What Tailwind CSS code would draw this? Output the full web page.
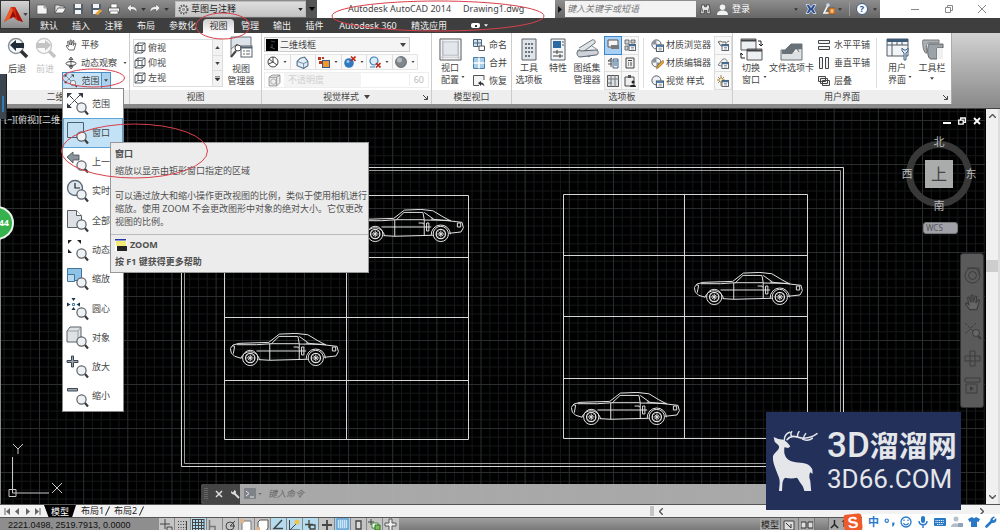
<!DOCTYPE html>
<html lang="zh-CN">
<head>
  <meta charset="UTF-8" />
  <meta name="viewport" content="width=device-width, initial-scale=1" />
  <title>Autodesk AutoCAD 2014 - Drawing1.dwg</title>
  <script src="https://cdn.jsdelivr.net/npm/@tailwindcss/browser@4"></script>
  <style>
    body, button, select, input {
      font-family: 'Noto Sans', 'Noto Sans CJK SC', sans-serif;
    }
  </style>
</head>
<body class="relative flex h-screen flex-col overflow-hidden bg-[#f0f0f0] text-[9px] leading-[12px] text-[#444]">

  <!-- Shared symbols -->
  <svg class="hidden" aria-hidden="true">
    <symbol id="lens" viewBox="0 0 24 24">
      <circle cx="15.500" cy="15.500" r="4.600" fill="#eef2f4" stroke="#5a6067" stroke-width="1.200" />
      <path d="M19 19l3 3.500" stroke="#3a3a3a" stroke-width="2.200" />
    </symbol>
    <symbol id="arrows" viewBox="0 0 24 24">
      <path d="M4 4l12 12M14 3L3 14" stroke="#333b44" stroke-width="1" stroke-dasharray="5 1" />
      <path d="M1 1h5L1 6zM17 1h-5l5 5zM1 16v-5l5 5z" fill="#333b44" />
    </symbol>
    <symbol id="tri" viewBox="0 0 6 4"><path d="M0 0h6L3 4z" fill="currentColor" /></symbol>
    <symbol id="cube" viewBox="0 0 12 12">
      <path d="M1 3.500l3-2.500h7v7.500L8 11H1zM1 3.500h7V11M8 3.500L11 1M4 1v7.500h7M4 8.500L1 11" fill="none" stroke="#4a5058" stroke-width=".9" />
    </symbol>
    <symbol id="hand" viewBox="0 0 12 12">
      <path d="M4 11L1 7l1-.8 1.500 1.300L2.500 2.500l1-.3L5 6V1h1.200l.3 5L8 1.500l1 .3L8.300 6.500 10 4l1 .5L9 11z" fill="inherit" stroke="currentColor" stroke-width=".8" />
    </symbol>
    <symbol id="orbit" viewBox="0 0 12 12">
      <path d="M6 1v10M6 0L4 2.500h4zM6 12L4 9.500h4z" stroke="currentColor" stroke-width=".8" fill="#eee" />
      <ellipse cx="6" cy="6.500" rx="5" ry="2" fill="none" stroke="currentColor" />
    </symbol>
    <symbol id="ball" viewBox="0 0 12 12">
      <circle cx="5" cy="5" r="4.200" fill="#f3f5f7" stroke="#555e68" stroke-width=".9" />
      <path d="M5 1v4H1a4 4 0 0 1 4-4M5 5h4a4 4 0 0 1-4 4z" fill="#8a949e" />
    </symbol>
    <symbol id="sheet" viewBox="0 0 12 12">
      <rect x="5" y="5.500" width="6.500" height="6" fill="#fff" stroke="#4a5560" stroke-width=".9" />
      <path d="M5 6.500h6.500" stroke="#3a6da0" stroke-width="1.500" />
      <path d="M7 8.500h3M7 10h3" stroke="#777" stroke-width=".7" />
    </symbol>
    <symbol id="car" viewBox="0 0 332 102">
      <g fill="none" stroke="#e4e4e4" stroke-width="3" stroke-linejoin="round">
        <path d="M34 76L14 70 4 60 1 46l8-10 18-5 90-3 32-25 50-2 36 4 30 18 24 13 34 4 4 16-7 13-36 4M86 80l34 2 115-3" />
        <path d="M20 35l60 0 45-3 23-22h57l4 22h-85M209 10l28 20M120 32v50M209 32v48M80 54h150M209 33l80 1M6 38l8 2-4 22M309 42h10v12h-10zM229 30l60 6" />
        <path d="M216 42h7v24h-7zM192 42h14v4M33 76a29 29 0 0 1 56 4M230 78a29 29 0 0 1 58-2" />
        <circle cx="61" cy="75" r="23" /><circle cx="61" cy="75" r="14" stroke-width="4" />
        <circle cx="259" cy="75" r="23" /><circle cx="259" cy="75" r="14" stroke-width="4" />
        <path d="M51 75h20M61 65v20M54 68l14 14M68 68L54 82M249 75h20M259 65v20M252 68l14 14M266 68l-14 14" />
      </g>
    </symbol>
  </svg>

  <!-- Title bar and ribbon tabs -->
  <header class="flex h-[33px] shrink-0 bg-[#3e3e3e]">
    <button aria-label="应用程序菜单" class="flex h-[29px] w-[30px] shrink-0 items-center border border-[#333] bg-linear-to-b from-[#d4d4d4] to-[#8c8c8c] pl-[2px]">
      <svg class="size-[20px]" viewBox="0 0 20 20"><path d="M1 17L8 2h4l8 15-6-2-4-3-4 2z" fill="#d22c12" /><path d="M8 2L1 17l5-3 4-9z" fill="#f05a28" /><path d="M10 6l3 6-3 0-3 2z" fill="#8f1006" /><path d="M12 2l8 15-6-2z" fill="#a81208" /></svg>
      <svg class="h-[3px] w-[5px] text-[#444]"><use href="#tri" /></svg>
    </button>
    <div class="flex min-w-0 flex-1 flex-col">
      <div class="flex h-[18px] shrink-0 items-stretch bg-linear-to-b from-[#8e8e8e] to-[#666]">
        <div class="flex w-[145px] shrink-0 items-center pl-[3px]">
          <button aria-label="新建" class="flex w-[18px] justify-center"><svg class="size-[12px]" viewBox="0 0 12 12"><path d="M1 2h7l3 3v6H1z" fill="#f4f4f4" stroke="#555" stroke-width=".7" /><path d="M8 2v3h3" fill="#ccc" stroke="#777" stroke-width=".6" /></svg></button>
          <button aria-label="打开" class="flex w-[18px] justify-center"><svg class="size-[12px]" viewBox="0 0 12 12"><path d="M1 10V2h4l1 1h4v2" fill="#ddd" stroke="#444" stroke-width=".7" /><path d="M1 10l3-5h8l-3 5z" fill="#f5f5f5" stroke="#444" stroke-width=".7" /></svg></button>
          <button aria-label="保存" class="flex w-[18px] justify-center"><svg class="size-[12px]" viewBox="0 0 12 12"><path d="M1 1h10v10H1z" fill="#52606e" /><path d="M3 1h6v4H3zM3 7h6v4H3z" fill="#f4f4f4" /></svg></button>
          <button aria-label="另存为" class="flex w-[18px] justify-center"><svg class="size-[12px]" viewBox="0 0 12 12"><path d="M1 1h10v10H1z" fill="#52606e" /><path d="M3 1h6v4H3zM3 7h6v4H3z" fill="#f4f4f4" /><path d="M5 11l5-5 2 2-4 4z" fill="#e9a13a" /></svg></button>
          <button aria-label="打印" class="flex w-[18px] justify-center"><svg class="size-[12px]" viewBox="0 0 12 12"><path d="M3 1h6v4H3z" fill="#fff" stroke="#555" stroke-width=".6" /><path d="M.5 5h11v4H.5z" fill="#eee" stroke="#444" stroke-width=".7" /><path d="M2 8h8v3H2z" fill="#fff" stroke="#555" stroke-width=".6" /></svg></button>
          <button aria-label="放弃" class="flex w-[18px] justify-center"><svg class="size-[12px]" viewBox="0 0 12 12"><path d="M1 5l4-4v2.500c4 0 6 1.500 6 6C9.500 7 8 6.500 5 6.500V9z" fill="#eee" stroke="#555" stroke-width=".5" /></svg></button>
          <svg class="h-[3px] w-[5px] text-[#333]"><use href="#tri" /></svg>
          <button aria-label="重做" class="flex w-[18px] justify-center"><svg class="size-[12px] -scale-x-100" viewBox="0 0 12 12"><path d="M1 5l4-4v2.500c4 0 6 1.500 6 6C9.500 7 8 6.500 5 6.500V9z" fill="#eee" stroke="#555" stroke-width=".5" /></svg></button>
          <svg class="h-[3px] w-[5px] text-[#333]"><use href="#tri" /></svg>
        </div>
        <label class="my-[1px] flex w-[131px] shrink-0 items-center gap-[2px] border border-[#bbb] bg-linear-to-b from-[#dedede] to-[#c4c4c4] px-[2px]">
          <svg class="size-[11px] shrink-0" viewBox="0 0 12 12"><circle cx="6" cy="6" r="4.500" fill="#eee" stroke="#555" stroke-width="1.800" stroke-dasharray="1.700 1.200" /><circle cx="6" cy="6" r="3.500" fill="#eee" stroke="#555" stroke-width=".7" /><circle cx="6" cy="6" r="1.400" fill="#aaa" stroke="#555" stroke-width=".6" /></svg>
          <select aria-label="工作空间" class="min-w-0 flex-1 appearance-none text-[#222]"><option>草图与注释</option></select>
          <svg class="h-[3px] w-[5px] shrink-0 text-[#222]"><use href="#tri" /></svg>
        </label>
        <button aria-label="自定义快速访问" class="flex w-[11px] shrink-0 items-center justify-center bg-[#555] text-black"><svg class="h-[4px] w-[6px]"><use href="#tri" /></svg></button>
        <h1 class="flex flex-1 items-center gap-[12px] bg-white pl-[31px] whitespace-nowrap"><span>Autodesk AutoCAD 2014</span><span>Drawing1.dwg</span></h1>
        <button aria-label="展开搜索" class="flex w-[10px] shrink-0 items-center justify-center"><svg class="h-[7px] w-[4px]" viewBox="0 0 4 7"><path d="M0 0l4 3.500L0 7z" fill="#111" /></svg></button>
        <input aria-label="搜索" placeholder="键入关键字或短语" class="my-[1px] w-[131px] shrink-0 bg-[#f2f2f2] px-[2px] italic placeholder:text-[#777]" />
        <div class="flex w-[184px] shrink-0 items-center pl-[4px] text-white">
          <button aria-label="搜索按钮" class="w-[12px]"><svg class="size-[11px]" viewBox="0 0 12 12"><path d="M2 1h3v2h2V1h3l1.500 9.500h-4V7h-3v3.500h-4z" fill="#e8e8e8" stroke="#333" stroke-width=".8" /><path d="M2.500 5v4M9.500 5v4" stroke="#555" /></svg></button>
          <button class="ml-[5px] flex items-center gap-[4px]"><svg class="size-[11px]" viewBox="0 0 12 12"><circle cx="6" cy="3.500" r="3" fill="#f2f2f2" /><path d="M0 12c0-4 3-5 6-5s6 1 6 5z" fill="#f2f2f2" /></svg>登录</button>
          <svg class="ml-[44px] h-[3px] w-[4px] text-[#333]"><use href="#tri" /></svg>
          <button aria-label="Exchange" class="ml-[7px]"><svg class="size-[12px]" viewBox="0 0 12 12"><path d="M1 1.500h3l2 3 2-3h3L8.500 6l2.500 4.500H8L6 7.500l-2 3H1L3.500 6z" fill="#2c4f92" stroke="#dde6f4" stroke-width=".8" /></svg></button>
          <button aria-label="连接" class="ml-[6px]"><svg class="size-[12px]" viewBox="0 0 12 12"><path d="M5 2l-4 8h6" fill="none" stroke="#fff" stroke-width="1.500" /><circle cx="5" cy="2" r="1.800" fill="#c9d8ee" /><rect x="6" y="5" width="6" height="6" fill="#e88b2d" stroke="#7a4310" stroke-width=".6" /><path d="M9 6.500v3" stroke="#fff" /></svg></button>
          <svg class="ml-[3px] h-[3px] w-[4px] text-[#333]"><use href="#tri" /></svg>
          <span class="ml-[7px] h-[14px] w-px bg-[#999]"></span>
          <button aria-label="帮助" class="ml-[6px] flex size-[12px] items-center justify-center rounded-full border border-[#3a5a8c] bg-white font-bold leading-[10px] text-[#24508f]">?</button>
          <svg class="ml-[5px] h-[3px] w-[4px] text-[#333]"><use href="#tri" /></svg>
        </div>
        <div class="flex w-[120px] shrink-0 items-center justify-between bg-white pr-[14px] pl-[31px] text-[#888]">
          <button aria-label="最小化"><svg class="size-[8px]" viewBox="0 0 8 8"><path d="M0 4.500h8" stroke="currentColor" /></svg></button>
          <button aria-label="还原"><svg class="size-[8px]" viewBox="0 0 8 8"><path d="M.5 2.500h5v5h-5zM2.500 2.500v-2h5v5h-2" fill="none" stroke="currentColor" /></svg></button>
          <button aria-label="关闭"><svg class="size-[8px]" viewBox="0 0 8 8"><path d="M0 0l8 8M8 0L0 8" stroke="currentColor" /></svg></button>
        </div>
      </div>
      <nav class="flex h-[15px] items-end pl-[3px] leading-[14px] text-[#f0f0f0]">
        <a href="#" class="w-[32px] text-center">默认</a>
        <a href="#" class="w-[32px] text-center">插入</a>
        <a href="#" class="w-[33px] text-center">注释</a>
        <a href="#" class="w-[32px] text-center">布局</a>
        <a href="#" class="w-[41px] text-center">参数化</a>
        <a href="#" class="w-[31px] rounded-t-sm bg-linear-to-b from-[#cfcfcf] to-white text-center text-[#333]">视图</a>
        <a href="#" class="w-[32px] text-center">管理</a>
        <a href="#" class="w-[32px] text-center">输出</a>
        <a href="#" class="w-[33px] text-center">插件</a>
        <a href="#" class="w-[74px] text-center">Autodesk 360</a>
        <a href="#" class="w-[48px] text-center">精选应用</a>
        <button aria-label="功能区显示" class="ml-[18px] flex h-[15px] items-center gap-[4px]"><span class="flex h-[5px] w-[9px] items-center justify-center rounded-xs bg-white"><span class="size-[2px] bg-[#333]"></span></span><svg class="h-[3px] w-[4px]"><use href="#tri" /></svg></button>
      </nav>
    </div>
  </header>

  <!-- Ribbon -->
  <section class="flex h-[71px] shrink-0 bg-linear-to-b from-[#d2d2d2] to-[#8d8d8d]">
    <!-- 二维导航 -->
    <div class="flex w-[130px] shrink-0 flex-col border-r border-[#ccc] bg-white">
      <div class="flex flex-1 pt-[3px]">
        <button class="flex w-[34px] flex-col items-center"><svg class="size-[23px]" viewBox="0 0 23 23"><circle cx="10" cy="10" r="7.500" fill="#f4f8fa" stroke="#8c959c" stroke-width="1.500" /><path d="M15 15l6 6" stroke="#333" stroke-width="3.500" /><path d="M4 9l6-5v3h8v5h-8v3z" fill="#1f2d3a" /></svg><span class="mt-[4px]">后退</span></button>
        <button class="flex w-[22px] flex-col items-center text-[#c4c4c4]"><svg class="size-[23px]" viewBox="0 0 23 23"><circle cx="10" cy="10" r="7.500" fill="#fafafa" stroke="#ccc" stroke-width="1.500" /><path d="M15 15l6 6" stroke="#c4c4c4" stroke-width="3.500" /><path d="M17 9l-6-5v3H2v5h9v3z" fill="#c4c4c4" /></svg><span class="mt-[4px]">前进</span></button>
        <div class="ml-[6px] flex flex-col">
          <button class="flex h-[18px] items-center gap-[4px] pl-[3px]"><svg class="size-[12px] fill-white"><use href="#hand" /></svg>平移</button>
          <button class="flex h-[18px] items-center gap-[4px] pl-[3px]"><svg class="size-[12px]"><use href="#orbit" /></svg>动态观察<svg class="ml-[2px] h-[2px] w-[4px]"><use href="#tri" /></svg></button>
          <button class="flex h-[17px] w-[49px] items-center border border-[#4a90c8] bg-[#c8e3f5]"><svg class="ml-[1px] size-[14px]"><use href="#arrows" /><use href="#lens" /></svg><span class="ml-[2px] flex-1">范围</span><span class="flex h-full w-[9px] items-center justify-center border-l border-[#4a90c8] bg-[#a9d2ee]"><svg class="h-[3px] w-[4px]"><use href="#tri" /></svg></span></button>
        </div>
      </div>
      <h2 class="h-[14px] bg-[#eee] pt-px text-center">二维导航</h2>
    </div>
    <!-- 视图 -->
    <div class="flex w-[132px] shrink-0 flex-col border-r border-[#ccc] bg-white">
      <div class="flex flex-1 pt-[6px] pl-[3px]">
        <div class="flex h-[48px] w-[90px] border border-[#ddd]">
          <div class="flex flex-1 flex-col">
            <button class="flex flex-1 items-center gap-[2px]"><svg class="size-[12px]"><use href="#cube" /></svg>俯视</button>
            <button class="flex flex-1 items-center gap-[2px]"><svg class="size-[12px]"><use href="#cube" /></svg>仰视</button>
            <button class="flex flex-1 items-center gap-[2px]"><svg class="size-[12px]"><use href="#cube" /></svg>左视</button>
          </div>
          <div class="flex w-[10px] flex-col border-l border-[#ddd] bg-[#f2f2f2]">
            <button aria-label="上一行" class="flex flex-1 items-center justify-center"><svg class="h-[3px] w-[5px] rotate-180"><use href="#tri" /></svg></button>
            <button aria-label="下一行" class="flex flex-1 items-center justify-center border-y border-[#ddd]"><svg class="h-[3px] w-[5px]"><use href="#tri" /></svg></button>
            <button aria-label="展开" class="flex flex-1 items-center justify-center"><svg class="h-[5px] w-[5px]" viewBox="0 0 5 5"><path d="M0 .5h5M0 2h5L2.500 5z" fill="#333" stroke="#333" stroke-width=".5" /></svg></button>
          </div>
        </div>
        <button class="-mt-[3px] flex w-[36px] flex-col items-center"><svg class="h-[23px] w-[23px]" viewBox="0 0 23 23"><path d="M1 1h20v12H1z" fill="#dde3e8" stroke="#6c757d" /><path d="M1 21V13l6-5 4 4" fill="#f4f4f4" stroke="#777" /><circle cx="8" cy="12" r="3" fill="#fff" stroke="#444" /><path d="M6 15l-5 6" stroke="#444" stroke-width="2" /><rect x="11" y="10" width="11" height="11" fill="#fff" stroke="#52606e" /><path d="M11 11.500h11" stroke="#52606e" stroke-width="2" /><path d="M13 15h2m1 0h4M13 18h2m1 0h4" stroke="#666" /></svg><span class="mt-[4px]">视图<br />管理器</span></button>
      </div>
      <h2 class="h-[14px] bg-[#eee] pt-px text-center">视图</h2>
    </div>
    <!-- 视觉样式 -->
    <div class="flex w-[170px] shrink-0 flex-col border-r border-[#ccc] bg-white">
      <div class="flex flex-1 flex-col gap-[2px] px-[2px] pt-[4px]">
        <label class="flex h-[15px] w-[146px] items-center gap-[2px] border border-[#ccc] bg-[#f4f4f4] px-[1px]">
          <svg class="size-[12px] shrink-0" viewBox="0 0 12 12"><path d="M0 0h12v12H0z" fill="#000" /><path d="M5 2l4 1M4 8l5 2M6 5v4" stroke="#666" stroke-width=".7" /></svg>
          <select aria-label="视觉样式" class="min-w-0 flex-1 appearance-none"><option>二维线框</option></select>
          <svg class="mr-[2px] h-[4px] w-[6px] shrink-0"><use href="#tri" /></svg>
        </label>
        <div class="flex h-[16px] w-[154px] divide-x divide-[#ddd] border border-[#e4e4e4] bg-[#fafafa]">
          <button aria-label="面样式" class="flex flex-1 items-center justify-around"><svg class="size-[12px]" viewBox="0 0 12 12"><circle cx="6" cy="6" r="5" fill="#fff" stroke="#444" /><path d="M6 1v5l4 3M6 6L1.500 8M2 3l4 3" stroke="#444" fill="none" /></svg><svg class="h-[2px] w-[4px]"><use href="#tri" /></svg></button>
          <button aria-label="阴影" class="flex flex-1 items-center justify-around"><svg class="size-[13px]" viewBox="0 0 12 12"><path d="M1 5l3-3 4-1 3 4v4l-4 2.500L1 9z" fill="#e2edf5" stroke="#4c6e8c" /><path d="M1 5l6 2 4-2M7 7v4" stroke="#4c6e8c" stroke-width=".7" fill="none" /></svg></button>
          <button aria-label="材质" class="flex flex-1 items-center justify-around"><svg class="size-[12px]" viewBox="0 0 12 12"><path d="M0 1h3v3H0zM4 1h2v2H4zM1 5h3v3H1z" fill="#b8371e" /><rect x="4.500" y="4.500" width="7" height="7" fill="#f0982d" stroke="#345b8c" /></svg><svg class="h-[2px] w-[4px]"><use href="#tri" /></svg></button>
          <button aria-label="光源" class="flex flex-1 items-center justify-around"><svg class="size-[12px]" viewBox="0 0 12 12"><circle cx="5" cy="7" r="4.800" fill="#3079c0" /><circle cx="4" cy="5.500" r="1.500" fill="#9cc8ec" /><path d="M7 .5l4.500 4.500M11.500.5L7 5" stroke="#c22a1c" stroke-width="1.600" /></svg><svg class="h-[2px] w-[4px]"><use href="#tri" /></svg></button>
          <button aria-label="边" class="flex flex-1 items-center justify-around"><svg class="size-[12px]" viewBox="0 0 12 12"><circle cx="5" cy="5" r="4" fill="#d8ecf8" stroke="#3b7cb4" stroke-width="1.200" /><path d="M1 11h5" stroke="#3b7cb4" /><path d="M7 7l4.500 4.500M11.500 7L7 11.500" stroke="#c22a1c" stroke-width="1.600" /></svg><svg class="h-[2px] w-[4px]"><use href="#tri" /></svg></button>
          <button aria-label="球体" class="flex flex-1 items-center justify-around"><svg class="size-[12px]" viewBox="0 0 12 12"><circle cx="6" cy="6" r="5.500" fill="#7f868c" stroke="#555" stroke-width=".7" /><circle cx="4.500" cy="4" r="2.500" fill="#b3b9be" /></svg><svg class="h-[2px] w-[4px]"><use href="#tri" /></svg></button>
        </div>
        <div class="flex h-[16px] items-center border border-[#eee] text-[#bbb]">
          <svg class="mx-[3px] size-[13px]" viewBox="0 0 12 12"><path d="M1 3l3-2h7v7l-3 3H1zM1 3h7v8M8 3l3-2" fill="#eee" stroke="#888" stroke-width=".8" /><circle cx="5" cy="7" r="2.500" fill="none" stroke="#999" stroke-width=".7" /></svg>
          <span class="h-full w-[77px] bg-[#f4f4f4] pl-[4px] leading-[14px] text-[#d0d0d0]">不透明度</span>
          <span class="ml-auto border-l border-[#eee] px-[4px]">60</span>
        </div>
      </div>
      <h2 class="relative flex h-[14px] items-center justify-center gap-[5px] bg-[#eee]">视觉样式<svg class="h-[4px] w-[6px]"><use href="#tri" /></svg><svg class="absolute right-[3px] size-[5px]" viewBox="0 0 5 5"><path d="M0 0l4 4M4.500 1v3.500H1" stroke="#444" fill="none" /></svg></h2>
    </div>
    <!-- 模型视口 -->
    <div class="flex w-[80px] shrink-0 flex-col border-r border-[#ccc] bg-white">
      <div class="flex flex-1 pt-[3px] pl-[5px]">
        <button class="relative mt-[2px] flex w-[26px] flex-col items-center"><svg class="size-[23px]" viewBox="0 0 24 24"><path d="M1 1h22v22H1z" fill="#f0f2f4" stroke="#555" /><path d="M4 4h16v14H4z" fill="#e2e7ec" stroke="#99a" stroke-width=".6" /><path d="M1 20h22M4 1v22M20 1v22" stroke="#999" stroke-width=".5" /></svg><span class="mt-px">视口<br />配置</span><svg class="absolute right-[-2px] bottom-[12px] h-[2px] w-[4px]"><use href="#tri" /></svg></button>
        <div class="ml-[10px] flex flex-col">
          <button class="flex h-[18px] items-center gap-[4px]"><svg class="size-[12px]" viewBox="0 0 12 12"><path d="M.5.5h8v7h-8z" fill="#cfe2f0" stroke="#4c6780" /><path d="M4.500.5v7M.5 4h8" stroke="#4c6780" /><path d="M6 7h5.500v4.500H6z" fill="#fff" stroke="#555" /></svg>命名</button>
          <button class="flex h-[18px] items-center gap-[4px]"><svg class="size-[12px]" viewBox="0 0 12 12"><path d="M.5.5h11v11H.5z" fill="#a8cde8" stroke="#4c7fa8" /><path d="M6 .5v11M.5 6h11" stroke="#fff" stroke-width="1.500" /></svg>合并</button>
          <button class="flex h-[18px] items-center gap-[4px]"><svg class="size-[12px]" viewBox="0 0 12 12"><path d="M11 5V.5H.5v10H6" fill="#f2f4f6" stroke="#555" /><path d="M5 8l3-2v1.500c2 0 3 1.500 3.500 4C10 10 9.500 9.500 8 9.500V11z" fill="#333" /></svg>恢复</button>
        </div>
      </div>
      <h2 class="h-[14px] bg-[#eee] pt-px text-center">模型视口</h2>
    </div>
    <!-- 选项板 -->
    <div class="flex w-[221px] shrink-0 flex-col border-r border-[#ccc] bg-white">
      <div class="flex flex-1 pt-[3px]">
        <button class="mt-[2px] flex w-[34px] flex-col items-center"><svg class="h-[23px] w-[16px]" viewBox="0 0 16 23"><path d="M1 1h14v21H1z" fill="#e0e4e8" stroke="#59626b" /><path d="M4 5h2v2H4zM7 5h2v2H7zM10 5h2v2h-2zM4 9h2v2H4zM7 9h2v2H7zM10 9h2v2h-2zM4 13h2v2H4zM7 13h2v2H7zM10 13h2v2h-2zM4 17h2v2H4zM7 17h2v2H7z" fill="#6c7680" /></svg><span class="mt-px">工具<br />选项板</span></button>
        <button class="mt-[2px] flex w-[24px] flex-col items-center"><svg class="h-[23px] w-[16px]" viewBox="0 0 16 23"><path d="M1 1h14v21H1z" fill="#f2f4f6" stroke="#59626b" /><path d="M3 3h8v7H3z" fill="#2b6aa5" /><path d="M12 4h2M12 7h2" stroke="#555" /><path d="M3 14h10M3 18h10M7 12v4M10 16v4" stroke="#444" /></svg><span class="mt-px">特性</span></button>
        <button class="mt-[2px] flex w-[34px] flex-col items-center"><svg class="h-[23px] w-[23px]" viewBox="0 0 23 23"><path d="M1 13L13 6l9 6-9 7z" fill="#eceff1" stroke="#8a9299" /><path d="M3 10L16 2c2-1 4 1 3 3L7 14" fill="#dfe3e6" stroke="#6b747c" /><path d="M1 15c0-2 2-3 4-2l15-1c3 0 3 5 0 5L4 19c-2 0-3-2-3-4z" fill="#cdd3d8" stroke="#59626b" /></svg><span class="mt-px">图纸集<br />管理器</span></button>
        <div class="grid w-[35px] grid-cols-2 grid-rows-3 gap-px border border-[#ddd] bg-[#ddd]">
          <button aria-label="命令行" class="flex items-center justify-center bg-[#a9d0f2] outline outline-[#3c86cf]"><svg class="size-[12px]" viewBox="0 0 12 12"><path d="M1 1h10v7H1z" fill="#f4f4f4" stroke="#555" /><path d="M4 6h8v4H4z" fill="#777" /></svg></button>
          <button aria-label="设计中心" class="flex items-center justify-center bg-[#f8f8f8]"><svg class="size-[12px]" viewBox="0 0 12 12"><path d="M1 1h4v4H1zM7 1h4v3H7zM1 7h3v4H1z" fill="#ccd3d9" stroke="#555" stroke-width=".8" /><use href="#sheet" /></svg></button>
          <button aria-label="数据库" class="flex items-center justify-center bg-[#f8f8f8]"><svg class="size-[12px]" viewBox="0 0 12 12"><path d="M5 1L1 4M5 4H1M5 7H1M4 1v9" stroke="#555" /><path d="M6 2h5v9H6z" fill="#e8eef4" stroke="#4c6780" /><path d="M6 4h5M7 6h3M7 8h3" stroke="#336a9c" /></svg></button>
          <button aria-label="计算器" class="flex items-center justify-center bg-[#f8f8f8]"><svg class="size-[12px]" viewBox="0 0 12 12"><path d="M2 1h8v10H2z" fill="#eee" stroke="#444" /><path d="M4 3.500h4M4 6h1m1 0h2M4 8h1m1 0h2" stroke="#444" /></svg></button>
          <button aria-label="图层" class="flex items-center justify-center bg-[#f8f8f8]"><svg class="size-[12px]" viewBox="0 0 12 12"><path d="M.5.500h11v11H.5z" fill="#dce2e7" stroke="#555" /><path d="M4 0v12M8 0v12M0 4h12M0 8h5" stroke="#777" /></svg></button>
          <button aria-label="标记" class="flex items-center justify-center bg-[#f8f8f8]"><svg class="size-[12px]" viewBox="0 0 12 12"><path d="M1 2h9v9H1z" fill="#eee" stroke="#444" /><path d="M4 0h3v3H4z" fill="#555" /><circle cx="9" cy="7" r="1.500" fill="#222" /><path d="M6 12c0-3 6-3 6 0z" fill="#222" /></svg></button>
        </div>
        <div class="my-[2px] ml-[4px] border-l border-[#ddd]"></div>
        <div class="ml-[7px] flex flex-col">
          <button class="flex h-[18px] items-center gap-[2px]"><svg class="size-[13px]"><use href="#ball" /><use href="#sheet" /></svg>材质浏览器</button>
          <button class="flex h-[18px] items-center gap-[2px]"><svg class="size-[13px]" viewBox="0 0 12 12"><use href="#ball" /><path d="M5 11l1-3 5-5 1.500 1.500-5 5z" fill="#e2a33b" stroke="#7d5513" stroke-width=".5" /></svg>材质编辑器</button>
          <button class="flex h-[18px] items-center gap-[2px]"><svg class="size-[13px]" viewBox="0 0 12 12"><circle cx="5" cy="5" r="4.200" fill="#eef1f3" stroke="#555e68" stroke-width=".9" /><use href="#sheet" /></svg>视觉 样式</button>
        </div>
        <div class="ml-auto flex w-[18px] flex-col gap-px border border-[#ddd] bg-[#ddd]">
          <button aria-label="渲染" class="flex flex-1 items-center justify-center bg-[#f8f8f8]"><svg class="size-[12px]" viewBox="0 0 12 12"><path d="M1 3c2 0 1 4 4 4h4V3H5c-1-1-2-1-4 0M10 3l2-1" fill="#eee" stroke="#444" stroke-width=".8" /><use href="#sheet" /></svg></button>
          <button aria-label="光源列表" class="flex flex-1 items-center justify-center bg-[#f8f8f8]"><svg class="size-[12px]" viewBox="0 0 12 12"><path d="M1 8l5-6c4-1 5 3 3 5L4 9z" fill="#f2f2f2" stroke="#666" stroke-width=".8" /><use href="#sheet" /></svg></button>
          <button aria-label="阳光特性" class="flex flex-1 items-center justify-center bg-[#f8f8f8]"><svg class="size-[12px]" viewBox="0 0 12 12"><path d="M4 0v11M0 5h8M1 2l6 6M7 2L1 8" stroke="#8a6b2a" stroke-width=".8" /><circle cx="4" cy="5" r="2" fill="#fff3c4" stroke="#8a6b2a" stroke-width=".6" /><use href="#sheet" /></svg></button>
        </div>
      </div>
      <h2 class="h-[14px] bg-[#eee] pt-px text-center">选项板</h2>
    </div>
    <!-- 用户界面 -->
    <div class="flex w-[219px] shrink-0 flex-col border-r border-[#aaa] bg-white">
      <div class="flex flex-1 pt-[3px]">
        <button class="relative mt-[2px] flex w-[36px] flex-col items-center"><svg class="h-[23px] w-[23px]" viewBox="0 0 23 23"><path d="M1 1h15v11H1zM7 11h15v11H7z" fill="#eef1f4" stroke="#555" /><path d="M1 2.500h15M7 12.500h15" stroke="#444" stroke-width="2" /><path d="M18 3h3v5M19 6l2 2 2-2M5 20H1v-4M0 17l1-2 2 2" stroke="#222" fill="none" /></svg><span class="mt-px">切换<br />窗口</span><svg class="absolute right-[2px] bottom-[12px] h-[2px] w-[4px]"><use href="#tri" /></svg></button>
        <button class="mt-[2px] flex w-[45px] flex-col items-center whitespace-nowrap"><svg class="h-[23px] w-[23px]" viewBox="0 0 23 23"><path d="M1 22V12h4l6-6h11v16z" fill="#dde1e4" stroke="#6b7278" /><path d="M5 12l6-6h11v5l-7 1-3 4H2v-4z" fill="#6a7279" /><path d="M13 14l3-4 3 4" fill="#eee" stroke="#666" /></svg><span class="mt-px">文件选项卡</span></button>
        <div class="ml-[4px] flex flex-col">
          <button class="flex h-[18px] items-center gap-[4px]"><svg class="size-[12px]" viewBox="0 0 12 12"><path d="M.5 1.500h11v3H.5zM.5 7.500h11v3H.5z" fill="#eef1f4" stroke="#444" /></svg>水平平铺</button>
          <button class="flex h-[18px] items-center gap-[4px]"><svg class="size-[12px]" viewBox="0 0 12 12"><path d="M1.500.5h3v11h-3zM7.500.5h3v11h-3z" fill="#eef1f4" stroke="#444" /></svg>垂直平铺</button>
          <button class="flex h-[18px] items-center gap-[4px]"><svg class="size-[12px]" viewBox="0 0 12 12"><path d="M.5 1.500h7v5h-7zM2.500 3.500h7v5h-7zM4.500 5.500h7v5h-7z" fill="#eef1f4" stroke="#444" /></svg>层叠</button>
        </div>
        <div class="my-[2px] ml-[6px] border-l border-[#ddd]"></div>
        <button class="relative mt-[2px] ml-[3px] flex w-[34px] flex-col items-center"><svg class="h-[23px] w-[23px]" viewBox="0 0 23 23"><path d="M1 1h21v17H1z" fill="#f2f4f6" stroke="#4f5a64" /><path d="M1 2.500h21" stroke="#3d5b78" stroke-width="3" /><path d="M1 7h21M6 4v14M11 4v3M16 4v3" stroke="#4f5a64" /><path d="M16 10v3l2 2v7h2v-7l2-2v-3l-2 2h-2z" fill="#dce4ec" stroke="#3e648a" /></svg><span class="mt-px">用户<br />界面</span><svg class="absolute right-[2px] bottom-[12px] h-[2px] w-[4px]"><use href="#tri" /></svg></button>
        <button class="mt-[2px] flex w-[36px] flex-col items-center"><svg class="h-[23px] w-[23px]" viewBox="0 0 23 23"><path d="M2 2h16v3H8c-3 0-3 4-2 10H5c-3 0-4-13-3-13z" fill="#a9b0b6" stroke="#777" /><path d="M8 6h14v4h-6v11h-6c-4 0-4-12-2-15z" fill="#9ba2a8" stroke="#666" /><path d="M16 10h6v11h-6z" fill="#f0f0f0" /></svg><span class="mt-px">工具栏</span><svg class="mt-[3px] h-[3px] w-[4px]"><use href="#tri" /></svg></button>
      </div>
      <h2 class="relative h-[14px] bg-[#eee] pt-px text-center">用户界面<svg class="absolute top-[5px] right-[3px] size-[5px]" viewBox="0 0 5 5"><path d="M0 0l4 4M4.500 1v3.500H1" stroke="#444" fill="none" /></svg></h2>
    </div>
  </section>
  <div class="h-[5px] shrink-0 border-b border-[#444] bg-[#8a8a8a]"></div>

  <!-- Drawing area -->
  <div class="flex min-h-0 flex-1">
    <main class="relative min-w-0 flex-1 overflow-hidden border-l border-[#888] bg-black">
      <svg class="block h-full w-full">
        <defs>
          <pattern id="grid" patternUnits="userSpaceOnUse" x="39" y="120" width="44.150" height="44">
            <path d="M9.300 0v44M18.100 0v44M27 0v44M35.800 0v44M0 9.300h45M0 18.100h45M0 26.900h45M0 35.700h45" stroke="#141618" />
            <path d="M.5 0v44M0 .5h45" stroke="#2b2e31" />
          </pattern>
        </defs>
        <g transform="translate(-1 -109)">
          <rect x="0" y="109" width="100%" height="100%" fill="url(#grid)" />
          <g fill="none" stroke="#d6d6d6">
            <path d="M181.500 167.500H843.500V466.500H181.500z" />
            <path d="M184.500 170.500H840.500V463.500H184.500z" stroke="#9a9a9a" />
            <path d="M224.500 195.500H468.500V439.500H224.500zM346.500 195.500V439.500M224.500 257.500H468.500M224.500 317.500H468.500M224.500 380.500H468.500" />
            <path d="M563.500 194.500H807.500V438.500H563.500zM684.500 194.500V438.500M563.500 255.500H807.500M563.500 316.500H807.500M563.500 378.500H807.500" />
          </g>
          <use href="#car" x="355" y="209" width="110" height="34" />
          <use href="#car" x="230" y="333" width="110" height="34" />
          <use href="#car" x="694" y="272" width="110" height="34" />
          <use href="#car" x="571" y="392" width="110" height="34" />
          <!-- UCS icon -->
          <path d="M12.500 457V493H49M9 489.500h7v7H9zM13 444l5 5 5-5M18 449v5M52 483l10 10M62 483l-10 10" fill="none" stroke="#c8c8c8" />
        </g>
      </svg>
      <p class="absolute top-[5px] left-[3px] w-[58px] overflow-hidden whitespace-nowrap text-[#ddd]">[−][俯视][二维</p>

      <div class="absolute top-[8px] right-[5px] flex items-center gap-[7px] text-white">
        <button aria-label="最小化视口"><svg class="size-[8px]" viewBox="0 0 8 8"><path d="M0 6h8" stroke="currentColor" stroke-width="2" /></svg></button>
        <button aria-label="还原视口"><svg class="size-[8px]" viewBox="0 0 8 8"><path d="M.7 3.200h4.500v4H.7zM2.700 3V1h4.600v4.300H5.500" fill="none" stroke="currentColor" stroke-width="1.300" /></svg></button>
        <button aria-label="关闭视口"><svg class="size-[8px]" viewBox="0 0 8 8"><path d="M1 1l6 6M7 1L1 7" stroke="currentColor" stroke-width="1.800" /></svg></button>
      </div>

      <!-- View cube -->
      <div class="absolute top-[27px] right-[9px] grid size-[76px] grid-cols-[12px_1fr_12px] grid-rows-[12px_1fr_12px] place-items-center text-[11px] leading-[12px] text-[#bbb]">
        <div class="absolute inset-[5px] rounded-full border-[7px] border-[#383838]"></div>
        <span class="relative col-start-2">北</span>
        <span class="relative col-start-1 row-start-2">西</span>
        <button class="relative col-start-2 row-start-2 size-[28px] bg-[#aaacac] text-[16px] leading-[28px] text-[#444]">上</button>
        <span class="relative col-start-3 row-start-2">东</span>
        <span class="relative col-start-2 row-start-3">南</span>
      </div>
      <button class="absolute top-[113px] right-[28px] h-[12px] w-[35px] rounded-[3px] border border-[#777] bg-[#9fa0a8] pl-[2px] text-left font-['Liberation_Sans'] text-[8px] leading-[10px] text-[#555]">WCS</button>

      <!-- Navigation bar -->
      <div class="absolute top-[144px] right-[2px] flex h-[155px] w-[24px] flex-col items-center justify-around rounded-[3px] border border-[#333] bg-[#5a5a5a] py-[8px] text-[#3c3c3c]">
        <button aria-label="导航控制盘"><svg class="size-[17px]" viewBox="0 0 17 17"><circle cx="8.500" cy="8.500" r="7.500" fill="none" stroke="currentColor" /><circle cx="8.500" cy="8.500" r="4" fill="none" stroke="currentColor" /><path d="M3 1h12v7" fill="none" stroke="currentColor" /></svg></button>
        <button aria-label="平移视图"><svg class="size-[17px] fill-[#666]"><use href="#hand" /></svg></button>
        <button aria-label="缩放视图"><svg class="size-[19px]" viewBox="0 0 19 19"><path d="M2 2l11 11M13 2L2 13" stroke="currentColor" stroke-dasharray="3 1" /><circle cx="13" cy="12" r="3.500" fill="#666" stroke="currentColor" /><path d="M15 15l3 3" stroke="currentColor" stroke-width="2" /></svg></button>
        <button aria-label="动态观察视图"><svg class="size-[17px]" viewBox="0 0 17 17"><path d="M6 1h5v15H6zM1 6h15v5H1z" fill="none" stroke="currentColor" /></svg></button>
        <button aria-label="动画"><svg class="size-[17px]" viewBox="0 0 17 17"><path d="M1 1h15v4H1zM2 7h11v9H2z" fill="none" stroke="currentColor" /><path d="M6 9l4 2.500L6 14z" fill="currentColor" /></svg></button>
      </div>

      <!-- Command line -->
      <div class="absolute right-[180px] bottom-0 left-[200px] flex h-[20px] items-center rounded-l-[3px] bg-[#b1b1b1]/95">
        <div class="flex h-full w-[39px] items-center gap-[7px] rounded-l-[3px] bg-[#454545] pl-[3px] text-[#ddd]">
          <svg class="h-[12px] w-[4px]" viewBox="0 0 4 12"><path d="M1 0v12M3 0v12" stroke="#888" stroke-dasharray="1 1" /></svg>
          <button aria-label="关闭命令行"><svg class="size-[8px]" viewBox="0 0 8 8"><path d="M1 1l6 6M7 1L1 7" stroke="currentColor" stroke-width="1.500" /></svg></button>
          <button aria-label="自定义"><svg class="size-[10px]" viewBox="0 0 10 10"><path d="M4 4l5 5" stroke="currentColor" stroke-width="2" /><path d="M1 2l2 1.500L4.500 1C7 2 6 5 4 5.500 2 5.500.5 4 1 2" fill="currentColor" /></svg></button>
        </div>
        <svg class="ml-[4px] size-[12px]" viewBox="0 0 12 12"><rect width="12" height="11" rx="1" fill="#7f8288" /><path d="M2 3l3 2.500L2 8M6 9h4" fill="none" stroke="#e8e8e8" /></svg>
        <svg class="ml-[2px] h-[2px] w-[4px] text-[#666]"><use href="#tri" /></svg>
        <input aria-label="命令" placeholder="键入命令" class="ml-[6px] min-w-0 flex-1 text-[9px] italic placeholder:text-[#666]" />
      </div>
    </main>

    <!-- Vertical scrollbar -->
    <div class="flex w-[14px] shrink-0 flex-col items-center border-r-2 border-[#ddd] bg-[#f0f0f0] text-[#555]">
      <button aria-label="向上滚动" class="pt-[5px]"><svg class="h-[4px] w-[7px]" viewBox="0 0 7 4"><path d="M0 4l3.500-3.500L7 4" fill="none" stroke="currentColor" stroke-width="1.400" /></svg></button>
      <div class="basis-[39%]"></div>
      <div class="mt-[-12px] h-[12px] w-full bg-[#cdcdcd]"></div>
      <button aria-label="向下滚动" class="mt-auto pb-[5px]"><svg class="h-[4px] w-[7px]" viewBox="0 0 7 4"><path d="M0 0l3.500 3.500L7 0" fill="none" stroke="currentColor" stroke-width="1.400" /></svg></button>
    </div>
  </div>

  <!-- Layout tabs -->
  <div class="flex h-[13px] shrink-0 items-stretch border-t border-[#555] bg-[#f2f2f2] text-[#222]">
    <div class="flex w-[44px] items-center justify-around px-[2px] text-[#666]">
      <button aria-label="第一个"><svg class="size-[7px]" viewBox="0 0 7 7"><path d="M1 0v7" stroke="currentColor" /><path d="M6 0v7L2 3.500z" fill="currentColor" /></svg></button>
      <button aria-label="上一个"><svg class="size-[7px]" viewBox="0 0 7 7"><path d="M5 0v7L1 3.500z" fill="currentColor" /></svg></button>
      <button aria-label="下一个"><svg class="size-[7px]" viewBox="0 0 7 7"><path d="M2 0v7l4-3.500z" fill="currentColor" /></svg></button>
      <button aria-label="最后一个"><svg class="size-[7px]" viewBox="0 0 7 7"><path d="M6 0v7" stroke="currentColor" /><path d="M1 0v7l4-3.500z" fill="currentColor" /></svg></button>
    </div>
    <button class="w-[32px] bg-black leading-[11px] text-white [clip-path:polygon(0_0,100%_0,88%_100%,14%_100%)]">模型</button>
    <button class="w-[31px] pl-[2px] leading-[12px]">布局1</button><span class="my-px w-px rotate-[25deg] bg-[#333]"></span>
    <button class="w-[33px] pl-[2px] leading-[12px]">布局2</button><span class="my-px w-px rotate-[25deg] bg-[#333]"></span>
    <div class="ml-auto flex w-[350px] items-center justify-between pr-[16px] text-[#555]">
      <span class="h-[10px] w-[4px] bg-[#c4c4c4]"></span>
      <svg class="mr-auto ml-[5px] h-[7px] w-[4px]" viewBox="0 0 4 7"><path d="M4 0L.5 3.500 4 7" fill="none" stroke="currentColor" stroke-width="1.400" /></svg>
      <svg class="h-[7px] w-[4px]" viewBox="0 0 4 7"><path d="M0 0l3.500 3.500L0 7" fill="none" stroke="currentColor" stroke-width="1.400" /></svg>
    </div>
  </div>

  <!-- Status bar -->
  <footer class="flex h-[13px] shrink-0 overflow-hidden border-t border-[#555] bg-linear-to-b from-[#a0a0a0] to-[#787878]">
    <output class="w-[159px] shrink-0 bg-[#8e8e8e] pl-[8px] font-['Liberation_Sans'] leading-[15px] text-[#111]">2221.0498, 2519.7913, 0.0000</output>
    <div class="flex divide-x divide-[#888] bg-[#c4c4c4] text-[#444]">
      <button aria-label="推断约束" class="w-[16px]"><svg class="size-[14px]" viewBox="0 0 14 14"><path d="M6 1v10M1 6h10M8 9h5v4H8z" fill="none" stroke="currentColor" /></svg></button>
      <button aria-label="捕捉" class="w-[16px]"><svg class="size-[14px]" viewBox="0 0 14 14"><path d="M3 3.500h8M3 6.500h8M3 9.500h8M3 12h8" stroke="currentColor" stroke-dasharray="1 1.500" /><path d="M11.500 3v9" stroke="currentColor" /></svg></button>
      <button aria-label="栅格" class="w-[16px] bg-[#b4dcee]"><svg class="size-[14px]" viewBox="0 0 14 14"><path d="M1.500 1v13M4.500 1v13M7.500 1v13M10.500 1v13M13 1v13M1 1.500h12M1 4.500h12M1 7.500h12M1 10.500h12" stroke="currentColor" /></svg></button>
      <button aria-label="正交" class="w-[16px]"><svg class="size-[14px]" viewBox="0 0 14 14"><path d="M2.500 2v10M2 8.500h6V13" fill="none" stroke="#777" stroke-width="1.500" /></svg></button>
      <button aria-label="极轴" class="w-[16px]"><svg class="size-[14px]" viewBox="0 0 14 14"><circle cx="7" cy="8" r="4" fill="none" stroke="currentColor" /><path d="M7 8l5-5M7 8h5" stroke="currentColor" /></svg></button>
      <button aria-label="对象捕捉" class="w-[16px]"><svg class="size-[14px]" viewBox="0 0 14 14"><path d="M3 3h9v10H3z" fill="#fff" stroke="#777" /><path d="M1 1h4v4H1z" fill="#e0b48f" /></svg></button>
      <button aria-label="三维捕捉" class="w-[16px]"><svg class="size-[14px]" viewBox="0 0 14 14"><path d="M3 4l2-2h8v8l-2 3H3z" fill="#fff" stroke="#555" /><path d="M1 9h4v4H1z" fill="#e0b48f" /></svg></button>
      <button aria-label="对象追踪" class="w-[16px] bg-[#b4dcee]"><svg class="size-[14px]" viewBox="0 0 14 14"><path d="M11 2L3 10.500h9" fill="none" stroke="currentColor" stroke-width="1.500" /></svg></button>
      <button aria-label="动态UCS" class="w-[16px] bg-[#b4dcee]"><svg class="size-[14px]" viewBox="0 0 14 14"><path d="M2.500 2v10H13M3 12l7-7" fill="none" stroke="currentColor" /><circle cx="10" cy="4" r="2.500" fill="#f1c34b" /></svg></button>
      <button aria-label="动态输入" class="w-[16px] bg-[#b4dcee]"><svg class="size-[14px]" viewBox="0 0 14 14"><path d="M6 2v8M2 6.500h8M7 7h5v4H7z" fill="none" stroke="currentColor" stroke-width="1.300" /></svg></button>
      <button aria-label="线宽" class="w-[16px]"><svg class="size-[14px]" viewBox="0 0 14 14"><path d="M8 2v10M3 7h10" stroke="currentColor" stroke-width="1.800" /></svg></button>
      <button aria-label="透明度" class="w-[16px] bg-[#a7d4f0]"><svg class="size-[14px]" viewBox="0 0 14 14"><rect x="2" y="1" width="11" height="10" fill="#c9e5f7" stroke="#3a80bc" /><path d="M4 3h7M4 5h7M4 7h7M4 9h7" stroke="#5a9ccc" stroke-dasharray="1 1" /></svg></button>
      <button aria-label="快捷特性" class="w-[16px]"><svg class="size-[14px]" viewBox="0 0 14 14"><path d="M5 3h5v8H5z" fill="#ddd" stroke="currentColor" stroke-width="1.300" /></svg></button>
      <button aria-label="选择循环" class="w-[16px]"><svg class="size-[14px]" viewBox="0 0 14 14"><path d="M4 1v6M1 4h6" stroke="currentColor" /><path d="M5 5h6v5H5z" fill="#fff" stroke="#3c8c2c" /><path d="M8 7h5v5H8z" fill="#79bd5c" stroke="#2f6d22" /></svg></button>
      <button aria-label="注释监视器" class="w-[16px]"><svg class="size-[14px]" viewBox="0 0 14 14"><path d="M6 1h3v4h4v3H9v5H6V8H2V5h4z" fill="#eee" stroke="#555" /></svg></button>
    </div>
    <div class="ml-auto flex w-[240px] divide-x divide-[#777] text-[#222]">
      <button class="w-[21px] bg-[#a8a8a8] leading-[14px]">模型</button>
      <button aria-label="快速查看布局" class="w-[18px] bg-[#a8a8a8]"><svg class="m-[2px] size-[12px]" viewBox="0 0 12 12"><path d="M1 1h10v9H1z" fill="#ddd" stroke="#444" /><path d="M3 3l5 5V4" fill="none" stroke="#333" /></svg></button>
      <button aria-label="快速查看图形" class="w-[16px] bg-[#a8a8a8]"><svg class="m-[2px] size-[12px]" viewBox="0 0 12 12"><path d="M0 2h5v6H0zM7 2h5v6H7z" fill="#ddd" stroke="#333" /></svg></button>
      <span class="w-[14px]"></span>
      <button class="flex flex-1 items-center gap-[2px] bg-[#a8a8a8] pl-px"><svg class="size-[9px]" viewBox="0 0 10 10"><path d="M5 0v5M5 5l-4 4M5 5l4 4" stroke="#222" stroke-width="1.600" /></svg>1:</button>
    </div>
  </footer>

  <!-- Left dock handle and floating badge -->
  <div class="absolute top-[74px] left-0 h-[45px] w-[7px] border-r border-[#222] bg-[#3c4650]"><div class="mx-auto mt-[22px] h-[16px] w-[2px] bg-[#2e7cae]"></div></div>
  <div class="absolute top-[206px] left-[-20px] flex size-[34px] items-center justify-end rounded-full border-2 border-[#e8f4e8] bg-[#35b14d] pr-[3px] font-bold text-white">44</div>

  <!-- Zoom drop-down -->
  <menu class="absolute top-[88px] left-[62px] grid h-[324px] w-[62px] grid-rows-11 border border-[#888] bg-white">
    <li class="flex"><button class="flex flex-1 items-center gap-[2px] pl-[3px]"><svg class="size-[24px] shrink-0"><use href="#arrows" /><use href="#lens" /></svg>范围</button></li>
    <li class="flex"><button class="flex flex-1 items-center gap-[2px] border border-[#5aa4d8] bg-[#c3e2f6] pl-[2px]"><svg class="size-[24px] shrink-0" viewBox="0 0 24 24"><path d="M1.500 1.500h16v15h-16z" fill="#c3dff2" stroke="#4b5f72" /><use href="#lens" /></svg>窗口</button></li>
    <li class="flex"><button class="flex flex-1 items-center gap-[2px] pl-[3px]"><svg class="size-[24px] shrink-0" viewBox="0 0 24 24"><path d="M1 7l6-5v3h6v5H7v3z" fill="#8b939b" stroke="#444c54" stroke-width=".8" /><use href="#lens" /></svg>上一</button></li>
    <li class="flex"><button class="flex flex-1 items-center gap-[2px] pl-[3px]"><svg class="size-[24px] shrink-0" viewBox="0 0 24 24"><circle cx="9" cy="9" r="7.500" fill="#dfe7ee" stroke="#5b6876" stroke-width="1.300" /><path d="M9 4v5h5" fill="none" stroke="#222" stroke-width="1.200" /><use href="#lens" /></svg>实时</button></li>
    <li class="flex"><button class="flex flex-1 items-center gap-[2px] pl-[3px]"><svg class="size-[24px] shrink-0" viewBox="0 0 24 24"><path d="M1.500 1.500h9l5 5v12h-14z" fill="#dde1e6" stroke="#59626b" /><path d="M10.500 1.500v5h5" fill="#fff" stroke="#59626b" /><use href="#lens" /></svg>全部</button></li>
    <li class="flex"><button class="flex flex-1 items-center gap-[2px] pl-[3px]"><svg class="size-[24px] shrink-0" viewBox="0 0 24 24"><path d="M2 2h4L2 6zM11 2h4v4zM2 11v4h4z" fill="#222" /><use href="#lens" /></svg>动态</button></li>
    <li class="flex"><button class="flex flex-1 items-center gap-[2px] pl-[3px]"><svg class="size-[24px] shrink-0" viewBox="0 0 24 24"><path d="M1.500 1.500h14v12h-14z" fill="#8ec3e8" stroke="#47759a" /><path d="M1.500 7.500h7v7h-7z" fill="#b9daf0" stroke="#47759a" /><use href="#lens" /></svg>缩放</button></li>
    <li class="flex"><button class="flex flex-1 items-center gap-[2px] pl-[3px]"><svg class="size-[24px] shrink-0" viewBox="0 0 24 24"><path d="M5.500 1h4l-2 3zM5.500 13h4l-2-3zM1 5.500v4l3.500-2zM14 5.500v4l-3.500-2z" fill="#1d3145" /><path d="M6.500 6.500h2v2h-2z" fill="#fff" stroke="#3a7cb0" /><use href="#lens" /></svg>圆心</button></li>
    <li class="flex"><button class="flex flex-1 items-center gap-[2px] pl-[3px]"><svg class="size-[24px] shrink-0" viewBox="0 0 24 24"><path d="M1 5l3-4h11v12l-3 3H1z" fill="#dfe2e5" stroke="#59626b" /><path d="M1 5h11v11M12 5l3-4" fill="none" stroke="#7b848c" stroke-width=".7" /><use href="#lens" /></svg>对象</button></li>
    <li class="flex"><button class="flex flex-1 items-center gap-[2px] pl-[3px]"><svg class="size-[24px] shrink-0" viewBox="0 0 24 24"><path d="M5.500 1h2v4.500h4.500v2H7.500V12h-2V7.500H1v-2h4.500z" fill="#9aa3ac" stroke="#3f4a55" /><use href="#lens" /></svg>放大</button></li>
    <li class="flex"><button class="flex flex-1 items-center gap-[2px] pl-[3px]"><svg class="size-[24px] shrink-0" viewBox="0 0 24 24"><path d="M1.500 4.500h10v2.500h-10z" fill="#9aa3ac" stroke="#3f4a55" /><use href="#lens" /></svg>缩小</button></li>
  </menu>

  <!-- Tooltip -->
  <div role="tooltip" class="absolute top-[142px] left-[110px] w-[259px] border border-[#999] bg-[#ececec] leading-[13px] whitespace-nowrap text-[#505050]">
    <div class="border-b border-[#bbb] pt-[4px] pb-[6px] pl-[4px]">
      <h3 class="font-bold">窗口</h3>
      <p class="mt-[4px]">缩放以显示由矩形窗口指定的区域</p>
      <p class="mt-[12px]">可以通过放大和缩小操作更改视图的比例，类似于使用相机进行<br />缩放。使用 ZOOM 不会更改图形中对象的绝对大小。它仅更改<br />视图的比例。</p>
    </div>
    <div class="pt-[3px] pb-[4px] pl-[4px] font-bold">
      <p class="flex items-center gap-[3px]"><svg class="size-[12px]" viewBox="0 0 12 12"><path d="M0 0h12v12H0z" fill="#fff" /><path d="M1 2h10v5H1z" fill="#f3ea77" /><path d="M0 0h11v1.500H0z" fill="#2335a8" /><path d="M2 7h10v5H2z" fill="#222" /></svg>ZOOM</p>
      <p class="mt-[4px]">按 F1 键获得更多帮助</p>
    </div>
  </div>

  <!-- Site badge -->
  <aside class="absolute right-[39px] bottom-[20px] flex h-[98px] w-[195px] items-center bg-[#22305a] pl-[7px] text-[#e4e6ea]">
    <svg class="h-[60px] w-[46px] shrink-0" viewBox="0 0 138 180">
      <path d="M5 32L2 18l14 6 16 2 10 8 10 12-6 5-12-2c0 10-2 18 4 28 8 14 24 16 44 18 22 2 30 8 36 20l1 14-7-5c-4 6-4 16 0 26l4 48H96c0-16-4-30-12-40-6-8-8-14-12-18-14 4-26 2-36 0-6 6-8 14-8 22l-2 36H16l4-40c0-8 0-12-2-18C6 108-2 92 0 76c2-10 14-14 18-26 2-8-6-10-13-18z" fill="#e4e6ea" />
      <path d="M34 28C34 16 38 8 50 4M42 26c8-10 18-12 30-8 26 8 44 2 60-10M56 16c-4-6-4-8 0-14M74 18c-2-8 0-10 4-16M92 20c0-6 2-8 6-12M84 20c8 10 24 10 34 2" fill="none" stroke="#e4e6ea" stroke-width="4.500" stroke-linecap="round" />
    </svg>
    <div class="ml-[8px] font-[Roboto,'Noto_Sans_CJK_SC',sans-serif] whitespace-nowrap">
      <p class="text-[29px] leading-[34px] font-bold"><span class="text-[35px] font-medium">3D</span>溜溜网</p>
      <p class="text-[26px] leading-[30px]">3D66.COM</p>
    </div>
  </aside>

  <!-- Input method bar -->
  <div class="absolute right-0 bottom-0 flex h-[16px] items-center text-[#2878c8]">
    <div class="flex h-[17px] w-[18px] -rotate-6 items-center justify-center rounded-[3px] bg-[#f0592a] font-['Liberation_Sans'] text-[16px] leading-[16px] font-bold text-white">S</div>
    <div class="flex h-full items-center gap-[5px] bg-white pr-[3px] pl-[6px]">
      <span class="text-[11px] font-bold">中</span>
      <svg class="size-[11px]" viewBox="0 0 12 12"><circle cx="3" cy="4" r="1.800" fill="none" stroke="currentColor" stroke-width="1.300" /><path d="M9 6h2.500c0 3-1 4-2.500 5" fill="currentColor" /></svg>
      <svg class="size-[12px]" viewBox="0 0 12 12"><circle cx="6" cy="6" r="5" fill="none" stroke="currentColor" stroke-width="1.300" /><path d="M3.500 7c1 2.500 4 2.500 5 0M4 3.500v1.500M8 3.500v1.500" fill="none" stroke="currentColor" stroke-width="1.200" /></svg>
      <svg class="size-[12px]" viewBox="0 0 12 12"><rect x="4" y="0" width="4" height="7" rx="2" fill="currentColor" /><path d="M2 5c0 5 8 5 8 0M6 9v3" fill="none" stroke="currentColor" stroke-width="1.400" /></svg>
      <svg class="size-[12px]" viewBox="0 0 12 12"><rect x="0" y="2" width="12" height="8" rx="1" fill="currentColor" /><path d="M1.500 4.500h9M1.500 6.500h9M3 8.500h6" stroke="#fff" stroke-dasharray="1 .8" /></svg>
      <svg class="size-[12px]" viewBox="0 0 12 12"><circle cx="5" cy="3" r="2.500" fill="#b5bfca" /><path d="M0 11c0-5 8-5 10 0z" fill="#b5bfca" /><path d="M7 7h5v4H7z" fill="#8fa4ba" /></svg>
      <svg class="size-[12px]" viewBox="0 0 12 12"><path d="M4 1c1 1.500 3 1.500 4 0l4 2-1.500 3L9 5.500V11H3V5.500L1.500 6 0 3z" fill="currentColor" /></svg>
      <svg class="size-[12px]" viewBox="0 0 12 12"><path d="M1.500 10.500L7 5" stroke="currentColor" stroke-width="2.600" stroke-linecap="round" /><path d="M10 1L7.500 3.500l1 1L11 2c1 2 0 5-3 5S4.500 3 7 1.500 9 .5 10 1" fill="currentColor" /></svg>
    </div>
  </div>

  <!-- Red annotation marks -->
  <svg class="pointer-events-none absolute inset-0 h-full w-full" fill="none" stroke="#d8404a">
    <ellipse cx="223" cy="26" rx="27" ry="13" />
    <ellipse cx="438" cy="16" rx="106" ry="15" />
    <ellipse cx="93.500" cy="78" rx="31" ry="9" />
    <ellipse cx="134.500" cy="151" rx="73" ry="27" />
  </svg>
</body>
</html>
